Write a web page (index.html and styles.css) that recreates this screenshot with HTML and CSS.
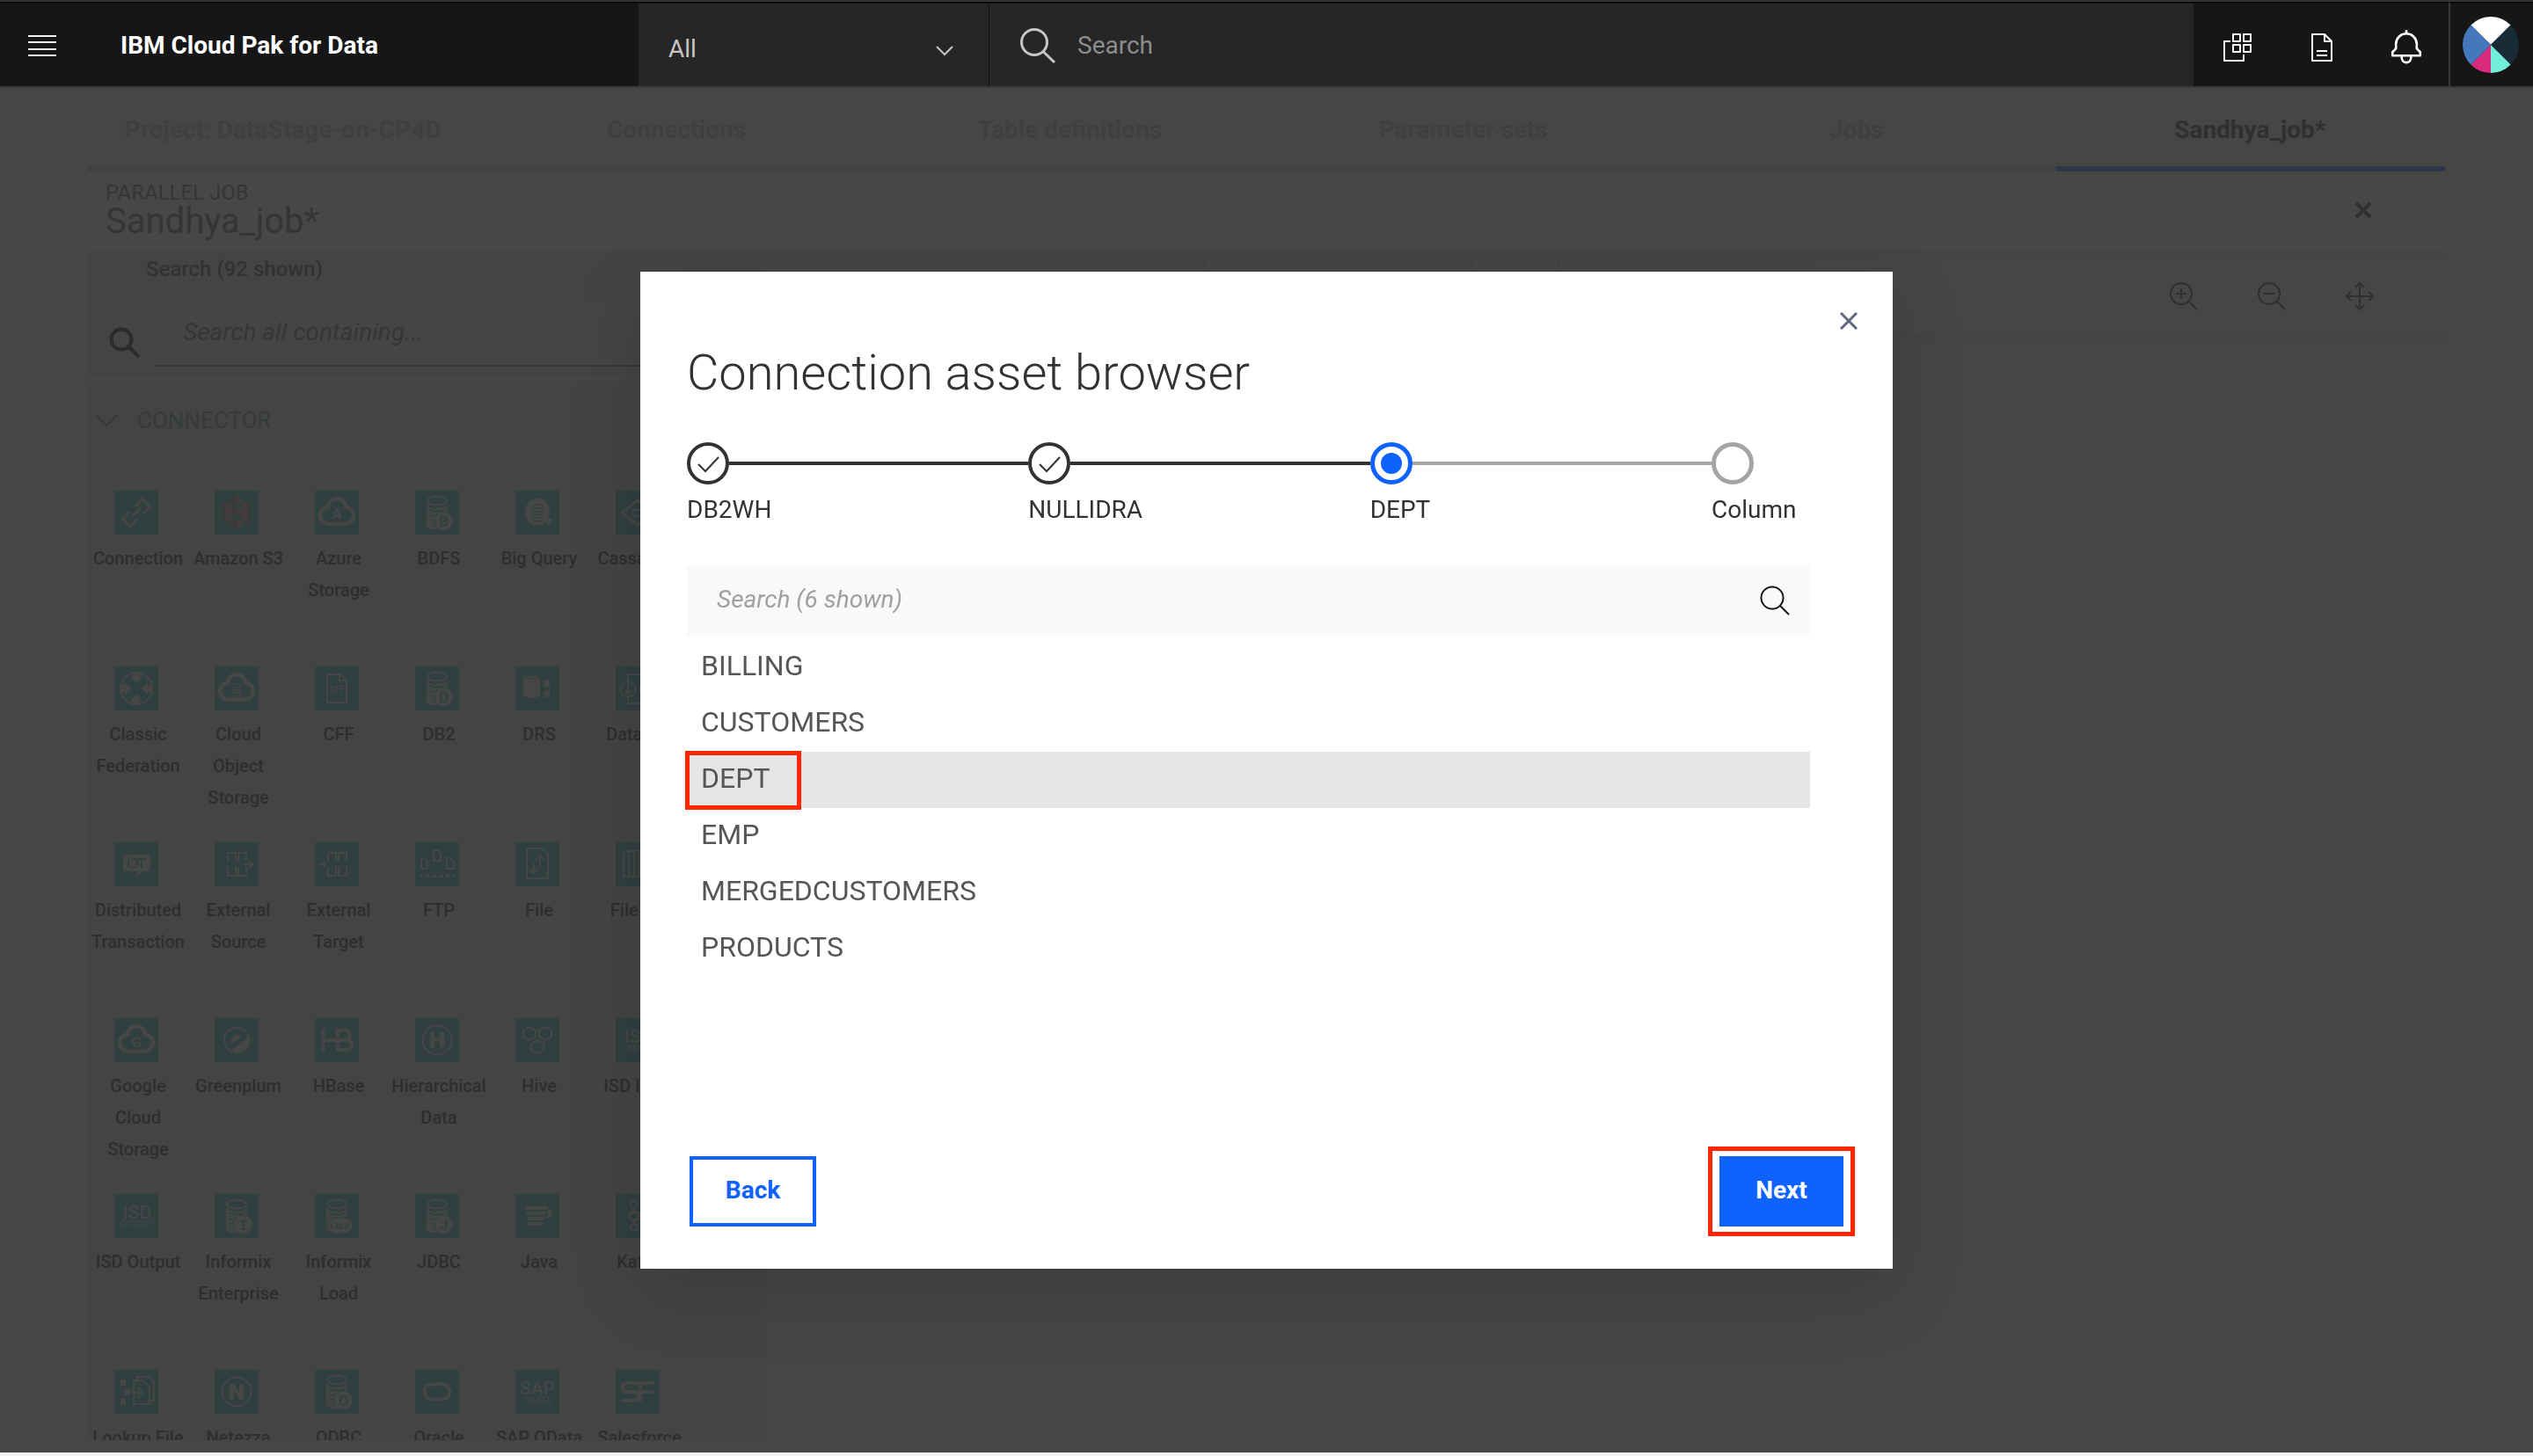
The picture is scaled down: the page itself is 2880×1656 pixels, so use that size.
FILE: index.html
```html
<!DOCTYPE html>
<html lang="en">
<head>
<meta charset="utf-8">
<title>IBM Cloud Pak for Data</title>
<meta name="viewport" content="width=device-width, initial-scale=1">
<link rel="stylesheet" href="styles.css">
</head>
<body>
<svg class="sprite" aria-hidden="true">
  <symbol id="cloud" viewBox="0 0 50 50"><path d="M16 37.700h18a9.500 9.500 0 0 0 1-19A10 9.800 0 0 0 15 18.700a9.500 9.500 0 0 0 1 19z" fill="none" stroke="currentColor" stroke-width="4.500"/></symbol>
  <symbol id="coins" viewBox="0 0 50 50"><g fill="none" stroke="currentColor" stroke-width="2"><ellipse cx="25" cy="11.500" rx="11" ry="5"/><path d="M14 16v5c0 6 22 6 22 0v-4c-2 6-20 6-22 0M14 23.500c2 6 20 6 22 0M14 23v19"/><path d="M14 28c2 3 6 4 10 4M14 32c2 3 5 4 9 4M14 36c2 3 5 4 9 4M14 40c2 2 5 3 10 3" stroke-width="2.500"/></g></symbol>
</svg>
<div class="app">
  <header class="topbar">
    <div class="brand">
      <button class="icon-btn" type="button" aria-label="Menu"><svg width="32" height="24" viewBox="0 0 32 24" aria-hidden="true"><path d="M0 1h32M0 8h32M0 16h32M0 23h32" stroke="#f4f4f4" stroke-width="2"/></svg></button>
      <span class="brand-name">IBM Cloud Pak for Data</span>
    </div>
    <div class="scope">
      <select class="scope-select" aria-label="Search scope"><option>All</option></select>
      <svg class="scope-arrow" width="20" height="12" viewBox="0 0 20 12" aria-hidden="true"><path d="M1 1l9 9 9-9" fill="none" stroke="#c6c6c6" stroke-width="2"/></svg>
    </div>
    <form class="global-search">
      <svg width="40" height="40" viewBox="0 0 40 40" aria-hidden="true"><g fill="none" stroke="#c6c6c6" stroke-width="3"><circle cx="16" cy="16" r="14.500"/><path d="M26 26.500L39 39"/></g></svg>
      <input type="text" placeholder="Search" aria-label="Search">
    </form>
    <div class="actions">
      <button class="icon-btn" type="button" aria-label="Apps"><svg width="32" height="32" viewBox="0 0 32 32" aria-hidden="true"><path d="M11 1h8v8h-8zM23 1h8v8h-8zM11 13h8v8h-8zM23 13h8v8h-8zM8 9H1v22h22v-7" fill="none" stroke="#fff" stroke-width="2" stroke-linejoin="round"/></svg></button>
      <button class="icon-btn" type="button" aria-label="Documents"><svg width="32" height="32" viewBox="0 0 32 32" aria-hidden="true"><path d="M5 1h14l8 8v22H5zM19 1v8h8M10 20h12M10 25h12" fill="none" stroke="#fff" stroke-width="2" stroke-linejoin="round"/></svg></button>
      <button class="icon-btn" type="button" aria-label="Notifications"><svg width="42" height="42" viewBox="0 0 32 32" aria-hidden="true"><path fill="#fff" fill-rule="evenodd" d="M28.7 19.300L26 16.600V13a10 10 0 0 0-9-9.950V1h-2v2.050A10 10 0 0 0 6 13v3.600l-2.700 2.700A1 1 0 0 0 3 20v3a1 1 0 0 0 1 1h7v1a5 5 0 0 0 10 0v-1h7a1 1 0 0 0 1-1v-3a1 1 0 0 0-.3-.7zM19 25a3 3 0 0 1-6 0v-1h6zm8-3H5v-1.600l2.700-2.700A1 1 0 0 0 8 17v-4a8 8 0 0 1 16 0v4a1 1 0 0 0 .3.700l2.700 2.700z"/></svg></button>
    </div>
    <a class="profile" href="#profile" aria-label="Profile"><svg width="64" height="64" viewBox="-32 -32 64 64" aria-hidden="true"><path fill="#fff" d="M0 0L-22.600-22.600A32 32 0 0 1 22.600-22.600z"/><path fill="#172b36" d="M0 0L22.600-22.600A32 32 0 0 1 22.600 22.600z"/><path fill="#73eedb" d="M0 0L22.600 22.600A32 32 0 0 1 0 32z"/><path fill="#da2c7f" d="M0 0V32A32 32 0 0 1-22.600 22.600z"/><path fill="#4477bb" d="M0 0L-22.600 22.600A32 32 0 0 1-22.600-22.600z"/></svg></a>
  </header>

  <main class="page">
    <nav class="tabs">
      <a href="#project">Project: DataStage-on-CP4D</a>
      <a href="#connections">Connections</a>
      <a href="#tables">Table definitions</a>
      <a href="#parameters">Parameter sets</a>
      <a href="#jobs">Jobs</a>
      <a href="#job" class="active">Sandhya_job*</a>
    </nav>
    <section class="job-head">
      <div>
        <p class="job-kind">PARALLEL JOB</p>
        <h1 class="job-name">Sandhya_job*</h1>
      </div>
      <button class="icon-btn" type="button" aria-label="Close job"><svg width="20" height="20" viewBox="0 0 20 20" aria-hidden="true"><path d="M2 2l16 16M18 2L2 18" stroke="#303030" stroke-width="4"/></svg></button>
    </section>
    <div class="workspace">
      <aside class="palette">
        <div class="palette-search">
          <label for="palette-input">Search (92 shown)</label>
          <div class="palette-field">
            <svg width="36" height="36" viewBox="0 0 36 36" aria-hidden="true"><g fill="none" stroke="#2b2b2b" stroke-width="4"><circle cx="14" cy="14" r="11.500"/><path d="M22 22l12 12"/></g></svg>
            <input id="palette-input" type="text" placeholder="Search all containing...">
          </div>
        </div>
        <button class="category" type="button"><svg width="26" height="14" viewBox="0 0 26 14" aria-hidden="true"><path d="M1 1l12 12L25 1" fill="none" stroke="#373737" stroke-width="2"/></svg>CONNECTOR</button>
        <ul class="stages">
          <li><svg viewBox="0 0 50 50"><path class="l3" d="M24 18l7.700-8.500 9 9L33 26M18 24l-8.500 8L18 41l8-9M21 29l9-9"/></svg><span>Connection</span></li>
          <li><svg viewBox="0 0 50 50"><path class="warm" d="M12 13l7 2v20l-7 2zM31 15l6-2v24l-6-2z"/><path class="dim" d="M9 14l3-1v24l-3-1zM37 13l4 2v21l-4 1zM19 8l6-2v10l-6-1zM19 33l6 2v9l-6-3zM19 20h6v9h-6z"/><path class="warm" d="M25 6l6 3v6l-6 1zM25 35l6-2v8l-6 3zM25 20h6v8h-6z"/></svg><span>Amazon S3</span></li>
          <li><svg viewBox="0 0 50 50"><use href="#cloud"/><text x="25" y="32" class="t16">A</text></svg><span>Azure Storage</span></li>
          <li><svg viewBox="0 0 50 50"><use href="#coins"/><circle class="badge" cx="32.500" cy="35" r="11"/><text x="32.500" y="41" class="t16 cut">B</text></svg><span>BDFS</span></li>
          <li><svg viewBox="0 0 50 50"><ellipse class="f" cx="25" cy="24" rx="14" ry="15.500"/><path class="f" d="M35 34l4-3 3 3-4 5-5-5z"/><g class="cutline"><ellipse cx="25" cy="18" rx="6" ry="2.500"/><ellipse cx="25" cy="22" rx="6" ry="2"/><ellipse cx="25" cy="26" rx="6" ry="2"/><ellipse cx="25" cy="29" rx="6" ry="2"/><ellipse cx="25" cy="33" rx="6" ry="2"/></g></svg><span>Big Query</span></li>
          <li><svg viewBox="0 0 50 50"><path class="l3" d="M7 25l18-14 18 14-18 14z"/><path class="l2" d="M20 22h10v7H20z"/></svg><span>Cassandra</span></li>

          <li><svg viewBox="0 0 50 50"><circle class="l2" cx="25" cy="25" r="18"/><path class="f" d="M21 7h8v4h3l-7 8-7-8h3zM21 43h8v-4h3l-7-8-7 8h3zM8 21v8h4v3l8-7-8-7v3zM42 21v8h-4v3l-8-7 8-7v3z"/></svg><span>Classic Federation</span></li>
          <li><svg viewBox="0 0 50 50"><use href="#cloud"/><g class="l1"><rect x="20" y="20" width="10" height="4" rx="1"/><rect x="20" y="24" width="10" height="3" rx="1"/><rect x="20" y="27" width="10" height="3" rx="1"/><rect x="20" y="30" width="10" height="4" rx="1"/></g></svg><span>Cloud Object Storage</span></li>
          <li><svg viewBox="0 0 50 50"><path class="l2" d="M14 9h15l7 7v25H14zM28 9v7h8"/><text x="25" y="29" class="t8">CFF</text></svg><span>CFF</span></li>
          <li><svg viewBox="0 0 50 50"><use href="#coins"/><circle class="badge" cx="32.500" cy="35" r="11"/><text x="32.500" y="41" class="t16 cut">D</text></svg><span>DB2</span></li>
          <li><svg viewBox="0 0 50 50"><path class="f" d="M9 12q9-3 19 0v22q-9 4-19 0zM33 15h6v8h-6zM33 27h6v8h-6z"/><path class="cutline" d="M10 13q8 2 17 0"/></svg><span>DRS</span></li>
          <li><svg viewBox="0 0 50 50"><circle class="l2" cx="14" cy="26" r="8.500"/><circle class="l2" cx="36" cy="26" r="8.500"/><path class="l2" d="M14 17V9h22v8M14 35v7h22v-7M14 20v10M10 27l4 4 4-4"/></svg><span>Data Set</span></li>

          <li><svg viewBox="0 0 50 50"><path class="f" d="M12 14h27q2 0 2 2v15q0 2-2 2h-6l-9 6 3-6H12q-2 0-2-2V16q0-2 2-2z"/><path class="cutline2" d="M16 18v11M19 18q7 0 7 5.500T19 29M26 19h10M31 19v11"/></svg><span>Distributed Transaction</span></li>
          <li><svg viewBox="0 0 50 50"><path class="l2" d="M15 22V12h9v10M27 22V12h9v9M15 28v10h9V28M27 28v10h9V28M33 25h10M39 21l4 4-4 4"/></svg><span>External Source</span></li>
          <li><svg viewBox="0 0 50 50"><path class="l2" d="M15 22V12h9v10M27 22V12h9v9M15 28v10h9V28M27 28v10h9V28M5 25h8M9 21l4 4-4 4"/></svg><span>External Target</span></li>
          <li><svg viewBox="0 0 50 50"><path class="l2" d="M21 9h5l3 4v8h-8zM7 18h4l3 4v8H7zM36 18h4l4 4v8h-8z"/><path class="f" d="M6 37h2v3H6zM12 37h4v3h-4zM19 37h5v3h-5zM27 37h5v3h-5zM35 37h4v3h-4zM43 37h2v3h-2z"/></svg><span>FTP</span></li>
          <li><svg viewBox="0 0 50 50"><path class="l2" d="M13 7h17l7 6v28H13zM21 24v11M17 30l4 5 5-5M28 27V15M23 20l5-5 5 5"/></svg><span>File</span></li>
          <li><svg viewBox="0 0 50 50"><path class="l2" d="M9 10h32v29H9zM15 10v29M21 10v29M27 10v29M34 10v29"/></svg><span>File Set</span></li>

          <li><svg viewBox="0 0 50 50"><use href="#cloud"/><text x="25" y="33" class="t16">G</text></svg><span>Google Cloud Storage</span></li>
          <li><svg viewBox="0 0 50 50"><circle class="l2" cx="25" cy="25" r="14"/><path class="f" d="M40 20q2 10-5 16-8 5-16 1zM19 29q-2-8 6-10 4 0 5 2z"/></svg><span>Greenplum</span></li>
          <li><svg viewBox="0 0 50 50"><path class="l4" d="M9.500 12v26M9.500 25H36M26 14v22M24 14h11q5 1 5 5.500T35 25q7 0 7 5.500T35 36H24"/></svg><span>HBase</span></li>
          <li><svg viewBox="0 0 50 50"><circle class="l2" cx="25" cy="25" r="16.500"/><path class="f" d="M17 16h5v7h6v-7h5v18h-5v-7h-6v7h-5z"/></svg><span>Hierarchical Data</span></li>
          <li><svg viewBox="0 0 50 50"><path class="l2" d="M16 10l7 4v7l-7 4-7-4v-7zM34 10l7 4v7l-7 4-7-4v-7zM25 25l7 4v7l-7 4-7-4v-7z"/></svg><span>Hive</span></li>
          <li><svg viewBox="0 0 50 50"><text x="26" y="28" class="t20">ISD</text><text x="26" y="38" class="t10">INPUT</text></svg><span>ISD Input</span></li>

          <li><svg viewBox="0 0 50 50"><text x="26" y="28" class="t20">ISD</text><text x="26" y="38" class="t10">OUTPUT</text></svg><span>ISD Output</span></li>
          <li><svg viewBox="0 0 50 50"><use href="#coins"/><circle class="badge" cx="32.500" cy="35" r="11"/><text x="32.500" y="41" class="t16 cut mono">I</text></svg><span>Informix Enterprise</span></li>
          <li><svg viewBox="0 0 50 50"><use href="#coins"/><ellipse class="badge" cx="28.500" cy="36" rx="15" ry="9.500"/><text x="28.500" y="40" class="t8 cut">I-BLK</text></svg><span>Informix Load</span></li>
          <li><svg viewBox="0 0 50 50"><use href="#coins"/><circle class="badge" cx="32.500" cy="35" r="11"/><text x="32.500" y="41" class="t16 cut">J</text></svg><span>JDBC</span></li>
          <li><svg viewBox="0 0 50 50"><path class="f" d="M11 14h26v4H11zM12 20h23l-1 4H13zM13 26h21l-1 4H14zM14 32h18l-1 4H15z"/><path class="l3" d="M36 20h4q1 5-4 7"/></svg><span>Java</span></li>
          <li><svg viewBox="0 0 50 50"><circle class="l2" cx="21" cy="12" r="4"/><circle class="l3" cx="21" cy="25" r="5"/><circle class="l2" cx="21" cy="38" r="4"/><circle class="l2" cx="33" cy="18" r="4"/><circle class="l2" cx="33" cy="32" r="4"/><path class="l2" d="M21 16v4M21 30v4M25 23l5-3M25 27l5 3"/></svg><span>Kafka</span></li>

          <li><svg viewBox="0 0 50 50"><path class="f" d="M7 11h6v7H7zM11 22h6v7h-6zM7 33h6v7H7z"/><path class="l2" d="M22 12h11l7 8v19H22zM26 11V8h14l5 6v21h-4M17 26h15M26 20l6 6-6 6"/></svg><span>Lookup File</span></li>
          <li><svg viewBox="0 0 50 50"><circle class="l2" cx="25" cy="25" r="16.500"/><path class="f" d="M17 34V16h5l6 11V16h5v18h-5l-6-11v11z"/></svg><span>Netezza</span></li>
          <li><svg viewBox="0 0 50 50"><use href="#coins"/><circle class="badge" cx="32.500" cy="35" r="11"/><text x="32.500" y="41" class="t16 cut">O</text></svg><span>ODBC</span></li>
          <li><svg viewBox="0 0 50 50"><rect class="l4" x="10.500" y="16.500" width="29" height="17" rx="8.500"/></svg><span>Oracle</span></li>
          <li><svg viewBox="0 0 50 50"><text x="25" y="28" class="t20">SAP</text><text x="25" y="38" class="t10">ODATA</text></svg><span>SAP OData</span></li>
          <li><svg viewBox="0 0 50 50"><path class="l4" d="M44 15H13q-5 0-5 5t5 5h8q5 0 5 5t-5 5H7M28 15v21M28 25h15"/></svg><span>Salesforce</span></li>
        </ul>
      </aside>
      <section class="canvas">
        <div class="canvas-tools">
          <span class="slot slot-s"></span><span class="slot slot-l"></span><span class="slot slot-s"></span><span class="slot slot-l"></span><span class="slot slot-s"></span>
          <div class="zoom-tools">
            <button class="icon-btn" type="button" aria-label="Zoom in"><svg width="32" height="32" viewBox="0 0 32 32" aria-hidden="true"><path class="tool" d="M22 22l9 9M7 13h12M13 7v12"/><circle class="tool" cx="13" cy="13" r="12"/></svg></button>
            <button class="icon-btn" type="button" aria-label="Zoom out"><svg width="32" height="32" viewBox="0 0 32 32" aria-hidden="true"><path class="tool" d="M22 22l9 9M7 13h12"/><circle class="tool" cx="13" cy="13" r="12"/></svg></button>
            <button class="icon-btn" type="button" aria-label="Fit to screen"><svg width="32" height="32" viewBox="0 0 32 32" aria-hidden="true"><path class="tool" d="M16 1v30M1 16h30M11 6l5-5 5 5M11 26l5 5 5-5M6 11l-5 5 5 5M26 11l5 5-5 5"/></svg></button>
          </div>
        </div>
      </section>
    </div>
  </main>
</div>

<div class="overlay">
  <section class="modal" role="dialog" aria-labelledby="modal-title">
    <div class="modal-close">
      <button class="icon-btn" type="button" aria-label="Close"><svg width="20" height="20" viewBox="0 0 20 20" aria-hidden="true"><path d="M1 1l18 18M19 1L1 19" stroke="#5f6680" stroke-width="3"/></svg></button>
    </div>
    <div class="modal-body">
      <h2 id="modal-title">Connection asset browser</h2>
      <ol class="steps">
        <li class="done"><div class="track"><svg width="48" height="48" viewBox="0 0 48 48" aria-hidden="true"><circle cx="24" cy="24" r="22" fill="none" stroke="#323232" stroke-width="4"/><path d="M13 25l8 8 15-16" fill="none" stroke="#323232" stroke-width="2"/></svg></div><span>DB2WH</span></li>
        <li class="done"><div class="track"><svg width="48" height="48" viewBox="0 0 48 48" aria-hidden="true"><circle cx="24" cy="24" r="22" fill="none" stroke="#323232" stroke-width="4"/><path d="M13 25l8 8 15-16" fill="none" stroke="#323232" stroke-width="2"/></svg></div><span>NULLIDRA</span></li>
        <li><div class="track"><svg width="48" height="48" viewBox="0 0 48 48" aria-hidden="true"><circle cx="24" cy="24" r="21.500" fill="none" stroke="#0f62fe" stroke-width="5"/><circle cx="24" cy="24" r="12" fill="#0f62fe"/></svg></div><span>DEPT</span></li>
        <li class="last"><div class="track"><svg width="48" height="48" viewBox="0 0 48 48" aria-hidden="true"><circle cx="24" cy="24" r="21.500" fill="none" stroke="#a4a4a4" stroke-width="5"/></svg></div><span>Column</span></li>
      </ol>
      <div class="asset-search">
        <input type="text" placeholder="Search (6 shown)" aria-label="Search assets">
        <svg width="34" height="34" viewBox="0 0 34 34" aria-hidden="true"><g fill="none" stroke="#161616" stroke-width="2"><circle cx="14" cy="14" r="12.500"/><path d="M23 23l10 10"/></g></svg>
      </div>
      <ul class="assets">
        <li><button type="button">BILLING</button></li>
        <li><button type="button">CUSTOMERS</button></li>
        <li><button type="button" class="selected">DEPT</button></li>
        <li><button type="button">EMP</button></li>
        <li><button type="button">MERGEDCUSTOMERS</button></li>
        <li><button type="button">PRODUCTS</button></li>
      </ul>
    </div>
    <div class="modal-footer">
      <button type="button" class="btn btn-outline">Back</button>
      <button type="button" class="btn btn-primary">Next</button>
    </div>
  </section>
</div>
</body>
</html>
```
FILE: styles.css
```css
*, *::before, *::after { box-sizing: border-box; }

body {
  margin: 0;
  background: #f4f4f4;
  font-family: Roboto, "Liberation Sans", sans-serif;
  font-size: 28px;
}

h1, h2, p, ul, ol { margin: 0; padding: 0; font-weight: 400; }
ul, ol { list-style: none; }
a { text-decoration: none; color: inherit; }
button, input, select { font: inherit; margin: 0; }
svg { display: block; flex: none; }
.sprite { position: absolute; width: 0; height: 0; }

.icon-btn {
  display: flex;
  align-items: center;
  justify-content: center;
  width: 32px;
  height: 32px;
  padding: 0;
  border: 0;
  background: none;
}

.app {
  display: flex;
  flex-direction: column;
  height: calc(100vh - 4px);
  background: #464646;
}

/* Top bar */
.topbar {
  display: flex;
  flex: none;
  height: 100px;
  border-top: 2px solid #333;
  border-bottom: 2px solid #393939;
  background: #161616;
}
.topbar > * { border-top: 2px solid #0b0b0b; }
.brand {
  display: flex;
  align-items: center;
  gap: 73px;
  width: 726px;
  padding: 2px 0 0 32px;
}
.brand-name { color: #fff; font-weight: 700; line-height: 36px; }
.scope {
  position: relative;
  display: flex;
  width: 399px;
  background: #262626;
  border-right: 1px solid #111;
}
.scope-select {
  flex: 1;
  appearance: none;
  padding: 8px 34px 0;
  border: 0;
  background: none;
  color: #c6c6c6;
}
.scope-arrow { position: absolute; right: 40px; top: 48px; }
.global-search {
  display: flex;
  flex: 1;
  align-items: center;
  gap: 25px;
  padding: 1px 0 0 35px;
  background: #262626;
}
.global-search input {
  flex: 1;
  padding: 0;
  border: 0;
  background: none;
  color: #c6c6c6;
}
.global-search input::placeholder { color: #8d8d8d; opacity: 1; }
.actions {
  display: flex;
  align-items: center;
  gap: 64px;
  padding: 6px 32px 0 34px;
}
.profile {
  display: flex;
  align-items: center;
  padding: 0 16px 0 14px;
  border-left: 2px solid #393939;
}

/* Page */
.page {
  display: flex;
  flex: 1;
  flex-direction: column;
  min-height: 0;
  padding: 0 100px;
}
.tabs {
  display: grid;
  grid-template-columns: repeat(6, 1fr);
  gap: 4px;
}
.tabs a {
  padding: 30px 0 23px;
  border-bottom: 6px solid #414141;
  color: #3f3f3f;
  font-weight: 700;
  line-height: 36px;
  text-align: center;
}
.tabs .active { border-color: #2f3849; color: #303030; }
.job-head {
  display: flex;
  align-items: center;
  justify-content: space-between;
  padding: 11px 77px 14px 20px;
  border-bottom: 6px solid #444;
  background: #474747;
}
.job-kind { color: #363636; font-size: 24px; line-height: 26px; }
.job-name { color: #353535; font-size: 40px; line-height: 40px; }
.workspace { display: flex; flex: 1; min-height: 0; }

/* Stage palette */
.palette {
  flex: none;
  width: 771px;
  margin-bottom: 14px;
  overflow: hidden;
  background: #444;
}
.palette-search { padding-bottom: 13px; border-bottom: 3px solid #474747; }
.palette-search label {
  display: block;
  padding-left: 66px;
  color: #323232;
  font-size: 24px;
  font-weight: 500;
  line-height: 28px;
}
.palette-field {
  display: flex;
  align-items: flex-end;
  gap: 14px;
  margin: 20px 20px 0 24px;
}
.palette-field svg { margin-bottom: 9px; }
.palette-field input {
  flex: 1;
  height: 77px;
  padding: 0 34px;
  border: 0;
  border-bottom: 2px solid #383838;
  background: #454545;
  color: #303030;
}
.palette-field input::placeholder { color: #363636; font-style: italic; opacity: 1; }
.category {
  display: flex;
  align-items: center;
  gap: 22px;
  padding: 27px 8px 62px;
  border: 0;
  background: none;
  color: #353a3a;
  font-size: 26px;
  line-height: 36px;
}
.stages {
  display: grid;
  grid-template-columns: repeat(6, 114px);
  grid-auto-rows: 200px;
}
.stages svg {
  width: 50px;
  height: 50px;
  margin: 0 0 9px 30px;
  background: #30403f;
  color: #464646;
}
.stages span {
  display: block;
  color: #2e2e2e;
  font-size: 20px;
  font-weight: 500;
  line-height: 36px;
  text-align: center;
}
.f, .badge, .stages text { fill: #464646; }
.badge { stroke: #30403f; stroke-width: 1; }
.dim { fill: #3a3838; }
.warm { fill: #443c3c; }
.l1, .l2, .l3, .l4 { fill: none; stroke: #464646; stroke-width: 1; }
.l2 { stroke-width: 2; }
.l3 { stroke-width: 3; }
.l4 { stroke-width: 4; }
.cutline, .cutline2 { fill: none; stroke: #30403f; stroke-width: 1; }
.cutline2 { stroke-width: 2; }
.stages text { font-weight: 700; text-anchor: middle; }
.stages .cut { fill: #30403f; }
.stages .mono { font-family: "Liberation Mono", monospace; }
.t8 { font-size: 9px; }
.stages .t10 { font-size: 10px; font-weight: 400; }
.t16 { font-size: 17px; }
.stages .t20 { font-size: 21px; font-weight: 500; }

/* Canvas */
.canvas { flex: 1; }
.canvas-tools {
  display: flex;
  height: 94px;
  border-bottom: 6px solid #444;
}
.slot { border-right: 3px solid #444; }
.slot-s { width: 98px; }
.slot-l { width: 304px; }
.zoom-tools {
  display: flex;
  flex: 1;
  align-items: center;
  justify-content: flex-end;
  gap: 68px;
  padding: 2px 81px 0 0;
}
.tool { fill: none; stroke: #303030; stroke-width: 2; }

/* Dialog */
.overlay {
  position: fixed;
  inset: 100px 0 4px;
  display: flex;
  align-items: center;
  justify-content: center;
}
.modal {
  width: 1424px;
  max-width: 100%;
  background: #fff;
  box-shadow: 0 24px 80px rgba(0, 0, 0, .14);
}
.modal-close {
  display: flex;
  justify-content: flex-end;
  padding: 40px 34px 0;
}
.modal-body { padding: 8px 94px 0 53px; }
.modal-body h2 {
  color: #323232;
  font-size: 56px;
  font-weight: 300;
  line-height: 70px;
}
.steps {
  display: grid;
  grid-template-columns: repeat(3, 1fr) 112px;
  margin-top: 44px;
}
.track { display: flex; align-items: center; }
.track::after { content: ""; flex: 1; height: 4px; background: #a4a4a4; }
.done .track::after { background: #323232; }
.last .track::after { content: none; }
.steps span {
  display: block;
  margin-top: 11px;
  color: #323232;
  line-height: 36px;
}
.asset-search {
  display: flex;
  align-items: center;
  height: 80px;
  margin: 45px 0 4px;
  padding: 0 23px 0 34px;
  background: #f9f9f9;
}
.asset-search input {
  flex: 1;
  padding: 0 0 3px;
  border: 0;
  background: none;
  color: #323232;
}
.asset-search input::placeholder { color: #a0a0a0; font-style: italic; opacity: 1; }
.assets { min-height: 588px; }
.assets button {
  position: relative;
  display: block;
  width: 100%;
  height: 64px;
  padding: 0 16px 4px;
  border: 0;
  background: none;
  color: #565656;
  font-size: 32px;
  line-height: 60px;
  text-align: left;
}
.assets .selected { background: #e5e5e5; }
.selected::after {
  content: "";
  position: absolute;
  left: -2px;
  top: -1px;
  width: 132px;
  height: 67px;
  border: 5px solid #ff2600;
}
.modal-footer {
  display: flex;
  justify-content: space-between;
  padding: 0 56px 48px;
}
.btn {
  position: relative;
  width: 144px;
  height: 80px;
  padding: 0 0 4px;
  border: 4px solid #0f62fe;
  font-weight: 700;
}
.btn-outline { background: #fff; color: #0f62fe; }
.btn-primary { width: 141px; background: #0f62fe; color: #fff; }
.btn-primary::after {
  content: "";
  position: absolute;
  inset: -15px -17px;
  border: 5px solid #ff2600;
}
```
